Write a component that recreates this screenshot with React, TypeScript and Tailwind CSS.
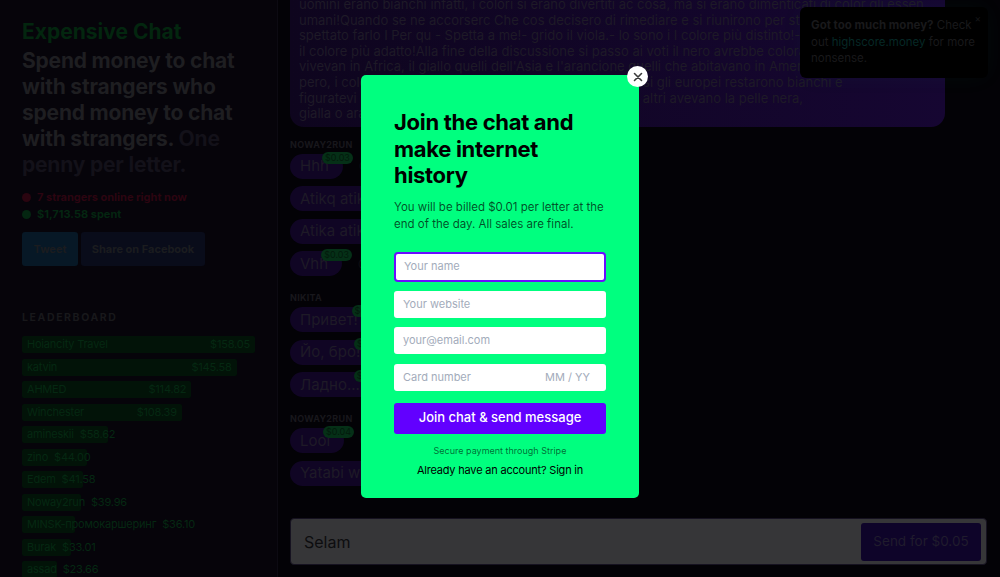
import React from 'react';

type Leader = { name: string; amount: number };

const leaders: Leader[] = [
  { name: 'Hoiancity Travel', amount: 158.05 },
  { name: 'katvin', amount: 145.58 },
  { name: 'AHMED', amount: 114.82 },
  { name: 'Winchester', amount: 108.39 },
  { name: 'amineskii', amount: 58.62 },
  { name: 'zino', amount: 44.0 },
  { name: 'Edem', amount: 41.58 },
  { name: 'Noway2run', amount: 39.96 },
  { name: 'MINSK-промокаршеринг', amount: 36.1 },
  { name: 'Burak', amount: 33.01 },
  { name: 'assad', amount: 23.66 },
];

const storyLines = [
  'uomini erano bianchi infatti, i colori si erano divertiti ac cosa, ma si erano dimenticati di color gli essen',
  'umani!Quando se ne accorserc Che cos decisero di rimediare e si riunirono per stabilire chi avrebbe',
  'spettato farlo I Per qu - Spetta a me!- grido il viola.- lo sono i I colore più distinto!- No, io sono',
  'il colore più adatto!Alla fine della discussione si passo ai voti il nero avrebbe colorato quelli che',
  "vivevan in Africa, il giallo quelli dell'Asia e l'arancione quelli che abitavano in America del Sud.",
  'pero, i colori si dimenticarono di chi viveva in Europa Cosi gli europei restarono bianchi e',
  'figuratevi la loro faccia quando si accorsero che tutti gli altri avevano la pelle nera,',
  'gialla o arancione!',
];

type Msg = { text: string; price?: string };
type Group = { author: string; messages: Msg[] };

const groups: Group[] = [
  {
    author: 'NOWAY2RUN',
    messages: [
      { text: 'Hhh', price: '$0.03' },
      { text: 'Atikq atikq atikq' },
      { text: 'Atika atika atika' },
      { text: 'Vhh', price: '$0.03' },
    ],
  },
  {
    author: 'NIKITA',
    messages: [
      { text: 'Привет!', price: '$0.07' },
      { text: 'Йо, бро!', price: '$0.07' },
      { text: 'Ладно...', price: '$0.07' },
    ],
  },
  {
    author: 'NOWAY2RUN',
    messages: [
      { text: 'Lool', price: '$0.04' },
      { text: 'Yatabi whe tabi' },
    ],
  },
];

const Sidebar = () => {
  const scale = 233 / 158.05;
  return (
    <aside className="w-[278px] shrink-0 border-r border-[#0c0a12] bg-[#06040a] pl-[22px] pt-[20px]">
      <h1 className="text-[21px] font-bold leading-[24px] text-[#03260f]">Expensive Chat</h1>
      <p className="mt-[4px] w-[236px] text-[21px] font-bold leading-[26px] tracking-[-0.2px] text-[#1e1e21]">
        Spend money to chat with strangers who spend money to chat with strangers.{' '}
        <span className="text-[#131119]">One penny per letter.</span>
      </p>
      <div className="mt-[11px] flex items-center gap-[6px] text-[11px] font-bold leading-[17px] text-[#2c0511]">
        <span className="h-[9px] w-[9px] rounded-full bg-[#2a0510]" />
        7 strangers online right now
      </div>
      <div className="flex items-center gap-[6px] text-[11px] font-bold leading-[17px] text-[#042611]">
        <span className="h-[9px] w-[9px] rounded-full bg-[#042611]" />
        $1,713.58 spent
      </div>
      <div className="mt-[9px] flex gap-[3px]">
        <button className="h-[34px] w-[56px] rounded-[3px] bg-[#071826] text-[11px] font-bold text-[#1b1c1f]">
          Tweet
        </button>
        <button className="h-[34px] w-[124px] rounded-[3px] bg-[#090c1a] text-[11px] font-bold text-[#1b1c1f]">
          Share on Facebook
        </button>
      </div>
      <h2 className="mt-[46px] text-[10.5px] font-bold leading-[12px] tracking-[1.6px] text-[#18181b]">LEADERBOARD</h2>
      <ul className="mt-[12px] flex flex-col gap-[5.5px]">
        {leaders.map((l) => {
          const w = l.amount * scale;
          return (
            <li key={l.name} className="relative h-[17px] text-[11px] leading-[17px] tracking-[-0.2px] text-[#052812]">
              <div className="absolute left-0 top-0 h-full rounded-[2px] bg-[#021308]" style={{ width: w }} />
              <div className="relative flex w-fit justify-between gap-[6px] whitespace-nowrap px-[5px]" style={{ minWidth: w }}>
                <span>{l.name}</span>
                <span>${l.amount.toFixed(2)}</span>
              </div>
            </li>
          );
        })}
      </ul>
    </aside>
  );
};

const Bubble = ({ msg }: { msg: Msg }) => (
  <div className="flex items-center">
    <div className="relative flex h-[25px] items-center rounded-full bg-[#100524] pl-[10px] pr-[14px] text-[15px] text-[#1e1a27]">
      {msg.text}
      {msg.price && (
        <span className="absolute -right-[10px] -top-[2px] rounded-full bg-[#053017] px-[3px] text-[9px] leading-[12px] text-[#031a0c]">
          {msg.price}
        </span>
      )}
    </div>
    <span className="ml-[16px] text-[11px] text-[#0f0e13]">0:01</span>
  </div>
);

const Chat = () => (
  <main className="flex min-w-0 flex-1 flex-col pl-[12px] pr-[13px]">
    <div className="flex-1 overflow-hidden">
      <div className="-mt-[10px] w-[655px] overflow-hidden rounded-b-[14px] bg-gradient-to-r from-[#0e051e] to-[#160632] pb-[5px] pl-[9px] pt-[7px] text-[13px] leading-[15.6px] text-[#1e1a27]">
        {storyLines.map((line, i) => (
          <div key={i} className="whitespace-nowrap">
            {line}
          </div>
        ))}
      </div>
      <div className="mt-[12px] flex flex-col gap-[16px]">
        {groups.map((g, i) => (
          <section key={i}>
            <div className="text-[9px] font-bold leading-[11px] tracking-[0.3px] text-[#18171c]">{g.author}</div>
            <div className="mt-[4px] flex flex-col gap-[7.5px]">
              {g.messages.map((m, j) => (
                <Bubble key={j} msg={m} />
              ))}
            </div>
          </section>
        ))}
      </div>
    </div>
    <div className="mb-[12px] flex h-[47px] items-center rounded-[4px] border border-[#161220] bg-[#363638] pl-[13px] pr-[5px]">
      <span className="flex-1 text-[16px] text-[#0d0d0f]">Selam</span>
      <button className="h-[38px] w-[120px] rounded-[3px] bg-[#0e0429] text-[13.5px] text-[#201c2d]">Send for $0.05</button>
    </div>
  </main>
);

const Toast = () => (
  <div className="absolute right-[12px] top-[7px] h-[71px] w-[188px] rounded-[6px] bg-black px-[11px] pt-[10px] text-[11.5px] leading-[16.5px] text-[#19191b] shadow-[0_0_24px_rgba(0,255,127,0.04)]">
    <span className="absolute right-[7px] top-[3px] text-[10px] text-[#161618]">×</span>
    <span className="font-bold">Got too much money?</span> Check out{' '}
    <span className="text-[#062826]">highscore.money</span> for more nonsense.
  </div>
);

const Field = ({ placeholder, right }: { placeholder: string; right?: string }) => (
  <div className="flex h-[27px] items-center justify-between rounded-[3px] bg-white pl-[9px] pr-[16px] text-[11px] text-[#a3acbb]">
    <span>{placeholder}</span>
    {right && <span>{right}</span>}
  </div>
);

const JoinModal = () => (
  <div className="fixed inset-0 flex items-center justify-center pb-[4px]">
    <div className="relative w-[278px] rounded-[5px] bg-[#00ff7f] px-[33px] pb-[20px] pt-[34px]">
      <button className="absolute -right-[9px] -top-[9px] flex h-[21px] w-[21px] items-center justify-center rounded-full bg-white">
        <svg width="10" height="10" viewBox="0 0 10 10" fill="none" stroke="#3a3a3a" strokeWidth="1.6" strokeLinecap="round">
          <path d="M1.5 1.5l7 7M8.5 1.5l-7 7" />
        </svg>
      </button>
      <h2 className="text-[22px] font-bold leading-[26.4px] tracking-[-0.3px] text-black">
        Join the chat and make internet history
      </h2>
      <p className="mt-[10px] text-[11.5px] leading-[17px] text-black/70">
        You will be billed $0.01 per letter at the end of the day. All sales are final.
      </p>
      <div className="mt-[19px] flex h-[30px] items-center rounded-[4px] border-2 border-[#6a0dff] bg-white pl-[8px] text-[11px] text-[#a3acbb]">
        Your name
      </div>
      <div className="mt-[9px] flex flex-col gap-[9.5px]">
        <Field placeholder="Your website" />
        <Field placeholder="your@email.com" />
        <Field placeholder="Card number" right="MM / YY" />
      </div>
      <button className="mt-[12px] h-[31px] w-full rounded-[3px] bg-[#6200ff] text-[13px] font-medium text-white">
        Join chat &amp; send message
      </button>
      <p className="mt-[10px] text-center text-[9px] leading-[13px] text-black/60">Secure payment through Stripe</p>
      <p className="mt-[5px] text-center text-[11px] leading-[16px] tracking-[-0.2px] text-black">
        Already have an account? Sign in
      </p>
    </div>
  </div>
);

export default function App() {
  return (
    <div className="relative flex h-[577px] w-full overflow-hidden bg-[#030206] font-['Inter',sans-serif]">
      <Sidebar />
      <Chat />
      <Toast />
      <JoinModal />
    </div>
  );
}
